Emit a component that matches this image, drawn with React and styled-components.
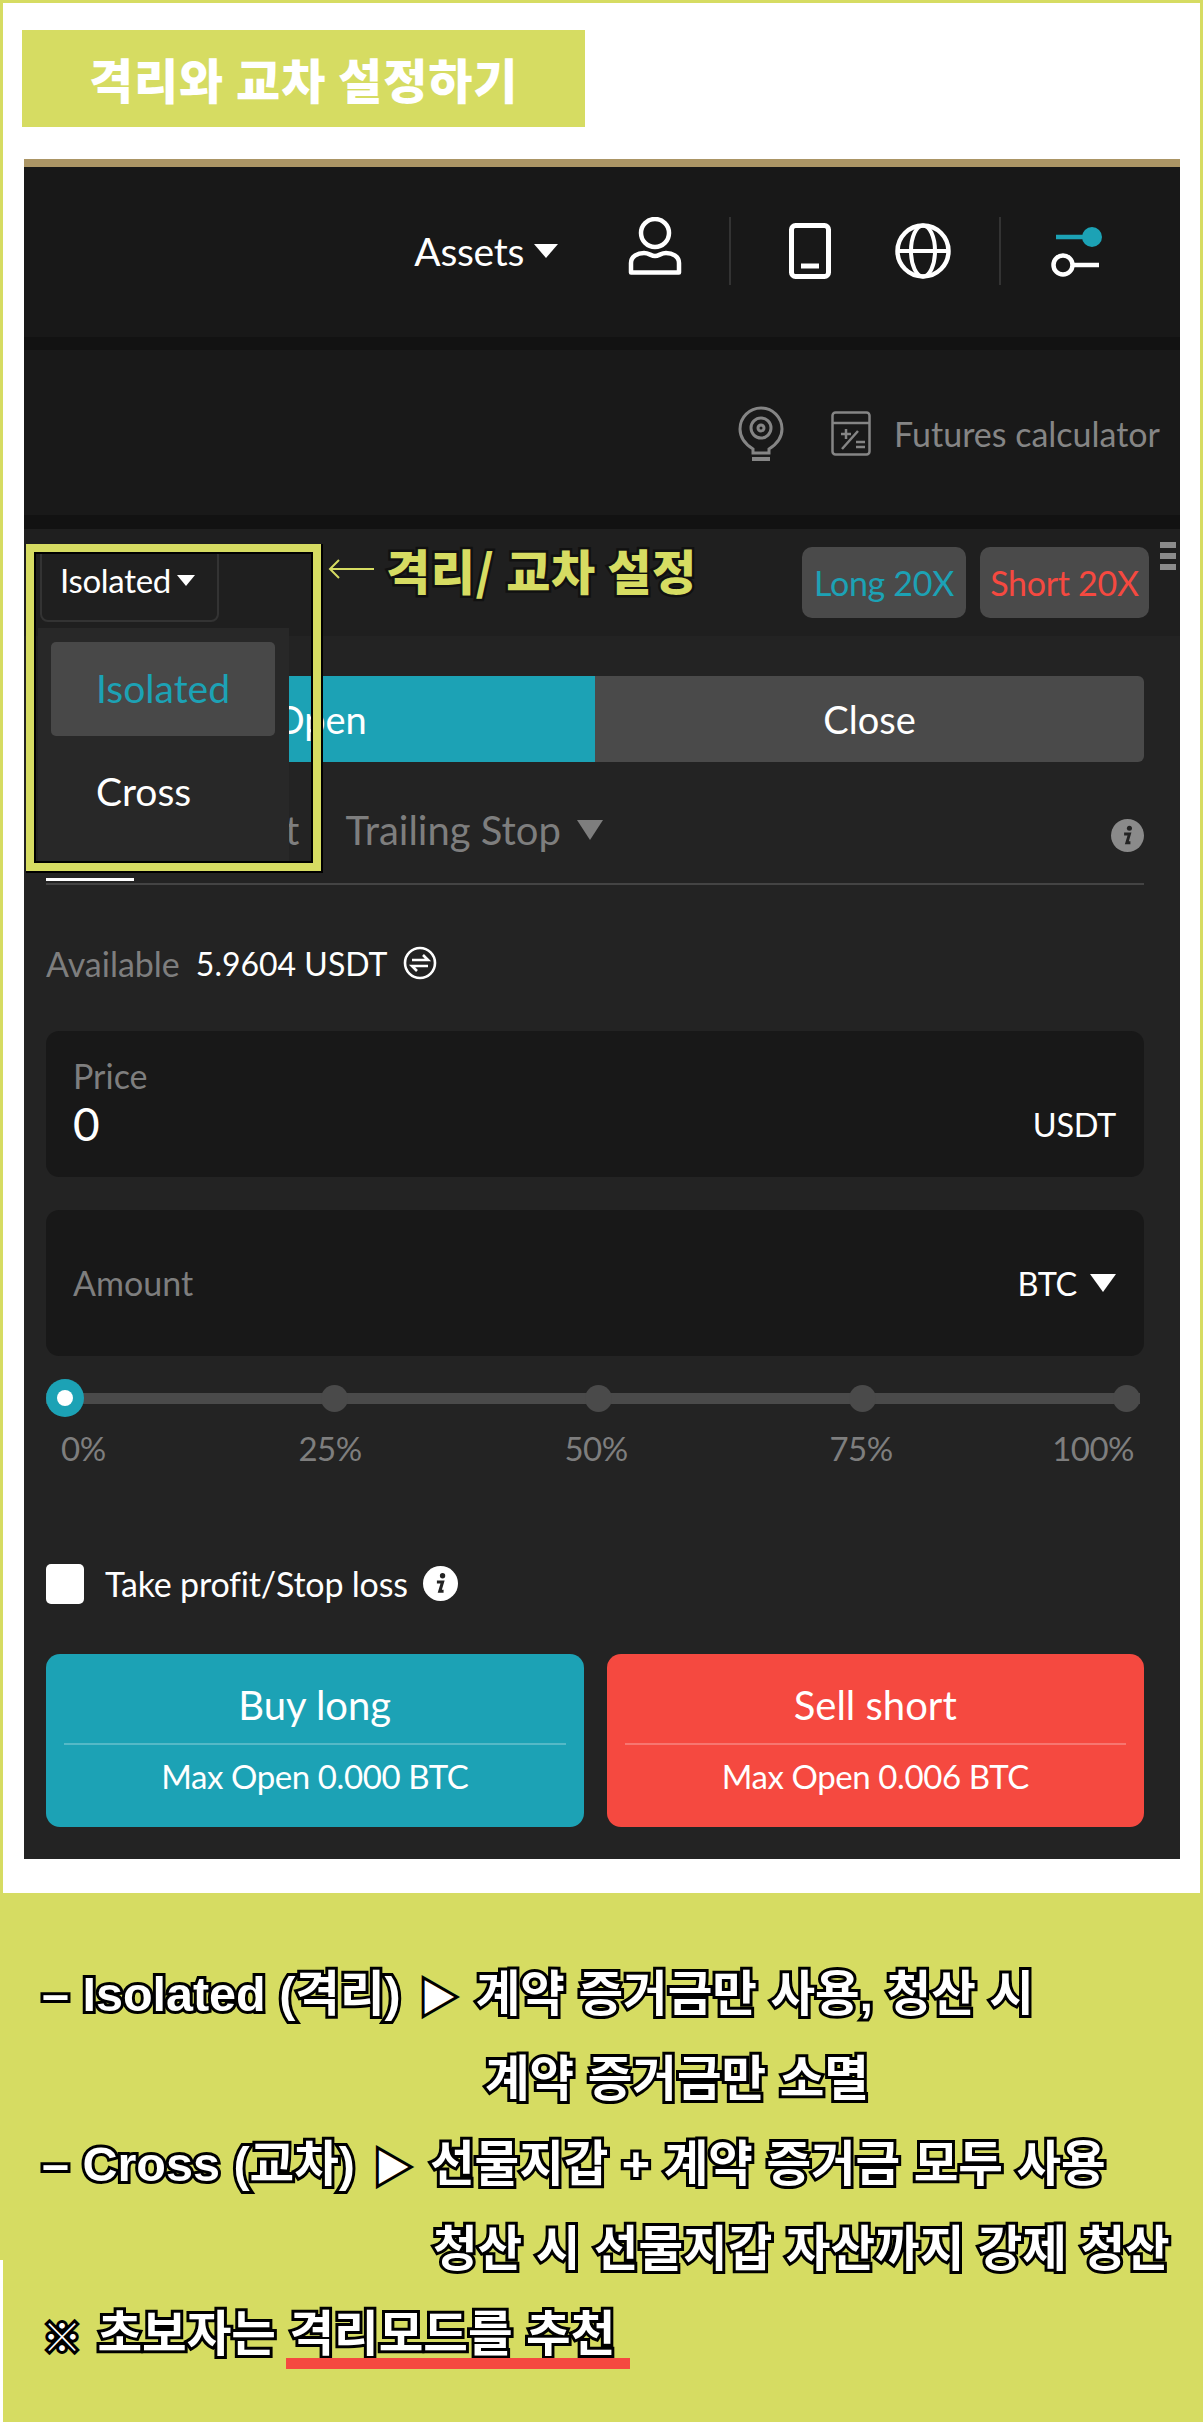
import React from "react";
import styled, { createGlobalStyle } from "styled-components";

const LIME = "#d6dc62";
const TEAL = "#1ca2b5";
const RED = "#f54940";
const UI = `"Lato", "Noto Sans CJK KR", sans-serif`;
const KR = `"Noto Sans CJK KR", "Noto Sans", sans-serif`;
const KR_LATIN = `"Liberation Sans", "Noto Sans CJK KR", sans-serif`;

const Global = createGlobalStyle`
  html, body { margin: 0; padding: 0; background: #fff; }
  * { box-sizing: border-box; }
`;

const Page = styled.div`
  width: 1203px;
  height: 2422px;
  display: flex;
  flex-direction: column;
  overflow: hidden;
  font-family: ${UI};
`;
const Upper = styled.section`
  height: 1893px;
  background: #fff;
  border: solid ${LIME};
  border-width: 3px 3px 0 3px;
  padding: 27px 20px 0 21px;
`;
const TitleBadge = styled.h1`
  margin: 0 0 32px -2px;
  width: 563px;
  height: 97px;
  background: ${LIME};
  color: #fff;
  font: 900 48px/97px ${KR};
  padding-left: 67px;
  letter-spacing: 0.9px;
  white-space: nowrap;
`;
const Shot = styled.div`
  width: 1156px;
  border-top: 8px solid #ab9565;
  background: #121212;
`;
const HeaderBar = styled.header`
  height: 170px;
  background: #181818;
  display: flex;
  align-items: center;
  justify-content: flex-end;
  padding: 0 77px 2px 0;
`;
const NavText = styled.span`
  color: #fff;
  font-size: 39px;
  letter-spacing: -0.3px;
  display: flex;
  align-items: center;
  gap: 10px;
`;
const Caret = styled.i`
  display: inline-block;
  width: 0;
  height: 0;
  border-style: solid;
  border-width: ${(p) => p.$h}px ${(p) => p.$w / 2}px 0 ${(p) => p.$w / 2}px;
  border-color: ${(p) => p.$color || "#fff"} transparent transparent transparent;
`;
const NavItem = styled.span`
  display: flex;
  margin-left: ${(p) => p.$ml}px;
`;
const VRule = styled.span`
  width: 2px;
  height: 68px;
  background: #333;
  margin-left: ${(p) => p.$ml}px;
`;
const ToolBar = styled.div`
  margin-top: 13px;
  height: 165px;
  background: #191919;
  display: flex;
  align-items: center;
  justify-content: flex-end;
  padding: 2px 20px 0 0;
  color: #858585;
`;
const ToolText = styled.span`
  font-size: 34px;
  margin-left: 23px;
`;
const ToolIcon = styled.span`
  display: flex;
  margin-left: ${(p) => p.$ml || 0}px;
`;
const Trade = styled.div`
  position: relative;
  margin-top: 14px;
  background: #232323;
  height: 1330px;
`;
const TopRow = styled.div`
  height: 107px;
  background: #1f1f1f;
  display: flex;
  align-items: flex-start;
  padding: 18px 4px 0 16px;
`;
const ModeButton = styled.div`
  width: 179px;
  height: 75px;
  border: 2px solid #333;
  border-radius: 8px;
  color: #fff;
  font-size: 33px;
  letter-spacing: -0.3px;
  display: flex;
  align-items: center;
  gap: 6px;
  padding: 0 0 9px 18px;
  margin-right: auto;
  white-space: nowrap;
`;
const LeverageButton = styled.div`
  width: ${(p) => p.$w}px;
  height: 71px;
  margin-left: ${(p) => p.$ml || 0}px;
  border-radius: 10px;
  background: #4a4a4a;
  color: ${(p) => p.$color};
  font-size: 34px;
  letter-spacing: -0.3px;
  display: flex;
  align-items: center;
  justify-content: center;
`;
const Burger = styled.div`
  width: 16px;
  margin: -5px 0 0 11px;
  display: flex;
  flex-direction: column;
  gap: 5px;
  span {
    height: 6px;
    background: #8b8b8b;
  }
`;
const Body = styled.div`
  padding: 40px 36px 0 22px;
`;
const Segments = styled.div`
  display: flex;
  height: 86px;
  border-radius: 6px;
  overflow: hidden;
`;
const Segment = styled.div`
  flex: 1;
  background: ${(p) => (p.$on ? TEAL : "#4a4a4a")};
  color: #fff;
  font-size: 38px;
  display: flex;
  align-items: center;
  justify-content: center;
`;
const OrderTabs = styled.div`
  display: flex;
  align-items: flex-start;
  height: 123px;
  border-bottom: 2px solid #444;
  padding-top: 48px;
  color: #7e7e7e;
  font-size: 40px;
  position: relative;
`;
const OrderTab = styled.span`
  margin-right: ${(p) => p.$mr}px;
  display: flex;
  align-items: center;
  gap: 16px;
  line-height: 40px;
`;
const ActiveLine = styled.span`
  position: absolute;
  left: 0;
  bottom: 2px;
  width: 88px;
  height: 3px;
  background: #fff;
`;
const InfoSlot = styled.span`
  margin-left: auto;
  margin-top: 9px;
  display: flex;
`;
const AvailableRow = styled.div`
  display: flex;
  align-items: center;
  height: 146px;
  padding-top: 10px;
`;
const Muted = styled.span`
  color: #7e7e7e;
  font-size: 34px;
  margin-right: 16px;
`;
const White = styled.span`
  color: #fff;
  font-size: 32px;
  margin-right: 16px;
`;
const Field = styled.div`
  height: 146px;
  border-radius: 13px;
  background: #181818;
  padding: 0 28px 0 27px;
  margin-bottom: 33px;
  display: flex;
  align-items: center;
  justify-content: space-between;
`;
const FieldStack = styled.div`
  display: flex;
  flex-direction: column;
`;
const FieldLabel = styled.span`
  color: #7e7e7e;
  font-size: 34px;
  line-height: 40px;
`;
const FieldValue = styled.span`
  color: #fff;
  font-size: 46px;
  line-height: 56px;
`;
const FieldUnit = styled.span`
  color: #fff;
  font-size: 32.5px;
  letter-spacing: -0.3px;
  display: flex;
  align-items: center;
  gap: 13px;
  padding-top: ${(p) => p.$pt || 0}px;
`;
const SliderWrap = styled.div`
  position: relative;
  height: 38px;
  margin-top: -10px;
  display: flex;
  align-items: center;
  justify-content: space-between;
  padding-right: 4px;
  &::before {
    content: "";
    position: absolute;
    left: 0;
    right: 4px;
    top: 14px;
    height: 11px;
    background: #4a4a4a;
  }
`;
const Thumb = styled.span`
  position: relative;
  width: 38px;
  height: 38px;
  border-radius: 50%;
  background: ${TEAL};
  display: flex;
  align-items: center;
  justify-content: center;
  &::after {
    content: "";
    width: 16px;
    height: 16px;
    border-radius: 50%;
    background: #fff;
  }
`;
const Stop = styled.span`
  position: relative;
  width: 27px;
  height: 27px;
  border-radius: 50%;
  background: #4a4a4a;
`;
const Scale = styled.div`
  display: grid;
  grid-template-columns: 136px 266px 266px 264px 1fr;
  text-align: center;
  color: #7e7e7e;
  font-size: 33px;
  letter-spacing: -0.5px;
  padding: 11px 10px 0 15px;
  line-height: 40px;
  span:first-child {
    text-align: left;
  }
  span:last-child {
    text-align: right;
  }
`;
const CheckRow = styled.div`
  display: flex;
  align-items: center;
  margin-top: 95px;
  color: #fff;
  font-size: 34px;
  letter-spacing: -0.2px;
`;
const Check = styled.span`
  width: 38px;
  height: 40px;
  background: #fff;
  border-radius: 5px;
  margin-right: 21px;
`;
const CheckInfo = styled.span`
  display: flex;
  margin-left: 15px;
`;
const Actions = styled.div`
  display: flex;
  gap: 23px;
  margin-top: 50px;
`;
const Action = styled.div`
  flex: 1;
  height: 173px;
  border-radius: 14px;
  background: ${(p) => p.$bg};
  color: #fff;
  padding: 0 18px;
  display: flex;
  flex-direction: column;
  text-align: center;
`;
const ActionTitle = styled.div`
  height: 91px;
  line-height: 103px;
  font-size: 40px;
  border-bottom: 2px solid rgba(255, 255, 255, 0.25);
`;
const ActionSub = styled.div`
  font-size: 33px;
  letter-spacing: -0.4px;
  line-height: 62px;
`;
const Menu = styled.div`
  position: absolute;
  left: 14px;
  top: 99px;
  width: 251px;
  height: 238px;
  background: #282828;
  padding: 14px 14px 0 13px;
  font-size: 39px;
  color: #fff;
`;
const MenuItem = styled.div`
  height: ${(p) => p.$h}px;
  border-radius: 5px;
  background: ${(p) => (p.$on ? "#484848" : "transparent")};
  color: ${(p) => (p.$on ? TEAL : "#fff")};
  padding-left: 45px;
  padding-bottom: ${(p) => (p.$on ? 2 : 0)}px;
  display: flex;
  align-items: center;
`;
const Highlight = styled.div`
  position: absolute;
  left: 2px;
  top: 15px;
  width: 295px;
  height: 327px;
  border: 8px solid ${LIME};
  box-shadow: 1px 1px 0 1px #000, inset 0 0 0 2px #000;
`;
const Callout = styled.div`
  position: absolute;
  left: 304px;
  top: 10px;
  display: flex;
  align-items: center;
  gap: 12px;
  font: 900 48px/60px ${KR};
  color: ${LIME};
  letter-spacing: 0.6px;
  -webkit-text-stroke: 5px #111;
  paint-order: stroke fill;
  white-space: nowrap;
`;
const Lower = styled.section`
  position: relative;
  flex: 1;
  background: ${LIME};
  padding: 59px 0 0 42px;
  &::after {
    content: "";
    position: absolute;
    left: 0;
    bottom: 0;
    width: 3px;
    height: 162px;
    background: #fff;
  }
`;
const Line = styled.p`
  margin: 0;
  height: 85px;
  padding-left: ${(p) => p.$indent || 0}px;
  color: #fff;
  font: 700 48.5px/85px ${KR_LATIN};
  -webkit-text-stroke: 6px #000;
  paint-order: stroke fill;
  white-space: nowrap;
`;
const Pointer = styled.span`
  font-size: 36px;
  margin: 0 6px;
`;
const Mark = styled.span`
  font-size: 38px;
  margin-right: 3px;
`;
const Marked = styled.span`
  position: relative;
  &::after {
    content: "";
    position: absolute;
    left: -3px;
    right: -15px;
    bottom: -8px;
    height: 11px;
    background: ${RED};
  }
`;

const UserIcon = () => (
  <svg width="56" height="68" viewBox="0 0 56 68" fill="none" stroke="#fff" strokeWidth="4.5" strokeLinejoin="round">
    <circle cx="28" cy="16" r="14" />
    <path d="M4 55.5V46C4 39 11 36 17 36C22 36 24 39 28 39C32 39 34 36 39 36C45 36 52 39 52 46V55.5Z" />
  </svg>
);
const PhoneIcon = () => (
  <svg width="42" height="56" viewBox="0 0 42 56" fill="none" stroke="#fff" strokeWidth="5">
    <rect x="2.5" y="2.5" width="37" height="51" rx="4" />
    <path d="M12 43H30" />
  </svg>
);
const GlobeIcon = () => (
  <svg width="56" height="56" viewBox="0 0 56 56" fill="none" stroke="#fff" strokeWidth="4.5">
    <circle cx="28" cy="28" r="25.5" />
    <ellipse cx="28" cy="28" rx="12" ry="25.5" strokeWidth="4" />
    <path d="M2 28H54" strokeWidth="4" />
  </svg>
);
const SliderIcon = () => (
  <svg width="52" height="52" viewBox="0 0 52 52" fill="none" strokeWidth="4.5">
    <path d="M5 12H40" stroke={TEAL} />
    <circle cx="41" cy="12" r="10" fill={TEAL} stroke="none" />
    <circle cx="12" cy="40" r="9.5" stroke="#fff" />
    <path d="M22 40H48" stroke="#fff" />
  </svg>
);
const BulbIcon = () => (
  <svg width="46" height="56" viewBox="0 0 46 56" fill="none" stroke="#858585" strokeWidth="3">
    <path d="M15 43C7 38 2 31 2 23A21 21 0 0 1 44 23C44 31 39 38 31 43V47H15Z" />
    <circle cx="23" cy="22" r="10" />
    <circle cx="23" cy="22" r="3" />
    <path d="M14 53H32" strokeWidth="4" />
  </svg>
);
const CalcIcon = () => (
  <svg width="40" height="45" viewBox="0 0 40 45" fill="none" stroke="#858585" strokeWidth="2.5">
    <rect x="1.5" y="1.5" width="37" height="42" rx="3" />
    <path d="M1.5 12H38.5M10 23H20M15 18V28M11 38L27 20M25 31H34M25 36H34" />
  </svg>
);
const InfoIcon = ({ size, bg, fg }) => (
  <svg width={size} height={size} viewBox="0 0 34 34">
    <circle cx="17" cy="17" r="17" fill={bg} />
    <circle cx="19" cy="9.5" r="2.6" fill={fg} />
    <path d="M13.5 15.5H19L16.3 24.5H20" fill="none" stroke={fg} strokeWidth="3" />
  </svg>
);
const SwapIcon = () => (
  <svg width="34" height="34" viewBox="0 0 34 34" fill="none" stroke="#fff" strokeWidth="2.6">
    <circle cx="17" cy="17" r="15" />
    <path d="M9 14H25L20 9M25 20H9L14 25" />
  </svg>
);
const ArrowIcon = () => (
  <svg width="46" height="22" viewBox="0 0 46 22" fill="none" stroke={LIME} strokeWidth="2">
    <path d="M46 11H2M11 2L2 11L11 20" />
  </svg>
);

export default function App() {
  return (
    <Page>
      <Global />
      <Upper>
        <TitleBadge>격리와 교차 설정하기</TitleBadge>
        <Shot>
          <HeaderBar>
            <NavText>
              Assets <Caret $w={25} $h={14} />
            </NavText>
            <NavItem $ml={69}><UserIcon /></NavItem>
            <VRule $ml={46} />
            <NavItem $ml={58}><PhoneIcon /></NavItem>
            <NavItem $ml={64}><GlobeIcon /></NavItem>
            <VRule $ml={48} />
            <NavItem $ml={50}><SliderIcon /></NavItem>
          </HeaderBar>
          <ToolBar>
            <ToolIcon><BulbIcon /></ToolIcon>
            <ToolIcon $ml={47}><CalcIcon /></ToolIcon>
            <ToolText>Futures calculator</ToolText>
          </ToolBar>
          <Trade>
            <TopRow>
              <ModeButton>
                Isolated <Caret $w={19} $h={11} />
              </ModeButton>
              <LeverageButton $w={164} $color={TEAL}>Long 20X</LeverageButton>
              <LeverageButton $w={169} $ml={14} $color={RED}>Short 20X</LeverageButton>
              <Burger><span /><span /><span /></Burger>
            </TopRow>
            <Body>
              <Segments>
                <Segment $on>Open</Segment>
                <Segment>Close</Segment>
              </Segments>
              <OrderTabs>
                <OrderTab $mr={41}>Limit</OrderTab>
                <OrderTab $mr={46}>Market</OrderTab>
                <OrderTab $mr={0}>
                  Trailing Stop <Caret $w={27} $h={20} $color="#7e7e7e" />
                </OrderTab>
                <InfoSlot><InfoIcon size={33} bg="#8a8a8a" fg="#232323" /></InfoSlot>
                <ActiveLine />
              </OrderTabs>
              <AvailableRow>
                <Muted>Available</Muted>
                <White>5.9604 USDT</White>
                <SwapIcon />
              </AvailableRow>
              <Field>
                <FieldStack>
                  <FieldLabel>Price</FieldLabel>
                  <FieldValue>0</FieldValue>
                </FieldStack>
                <FieldUnit $pt={40}>USDT</FieldUnit>
              </Field>
              <Field>
                <FieldLabel>Amount</FieldLabel>
                <FieldUnit>
                  BTC <Caret $w={27} $h={18} />
                </FieldUnit>
              </Field>
              <SliderWrap>
                <Thumb />
                <Stop />
                <Stop />
                <Stop />
                <Stop />
              </SliderWrap>
              <Scale>
                <span>0%</span>
                <span>25%</span>
                <span>50%</span>
                <span>75%</span>
                <span>100%</span>
              </Scale>
              <CheckRow>
                <Check />
                Take profit/Stop loss
                <CheckInfo><InfoIcon size={35} bg="#fff" fg="#232323" /></CheckInfo>
              </CheckRow>
              <Actions>
                <Action $bg={TEAL}>
                  <ActionTitle>Buy long</ActionTitle>
                  <ActionSub>Max Open 0.000 BTC</ActionSub>
                </Action>
                <Action $bg={RED}>
                  <ActionTitle>Sell short</ActionTitle>
                  <ActionSub>Max Open 0.006 BTC</ActionSub>
                </Action>
              </Actions>
            </Body>
            <Menu>
              <MenuItem $on $h={94}>Isolated</MenuItem>
              <MenuItem $h={110}>Cross</MenuItem>
            </Menu>
            <Highlight />
            <Callout>
              <ArrowIcon />
              격리/ 교차 설정
            </Callout>
          </Trade>
        </Shot>
      </Upper>
      <Lower>
        <Line>– Isolated (격리) <Pointer>▶</Pointer> 계약 증거금만 사용, 청산 시</Line>
        <Line $indent={443}>계약 증거금만 소멸</Line>
        <Line>– Cross (교차) <Pointer>▶</Pointer> 선물지갑 + 계약 증거금 모두 사용</Line>
        <Line $indent={391}>청산 시 선물지갑 자산까지 강제 청산</Line>
        <Line $indent={1}><Mark>※</Mark> 초보자는 <Marked>격리모드를 추천</Marked></Line>
      </Lower>
    </Page>
  );
}
